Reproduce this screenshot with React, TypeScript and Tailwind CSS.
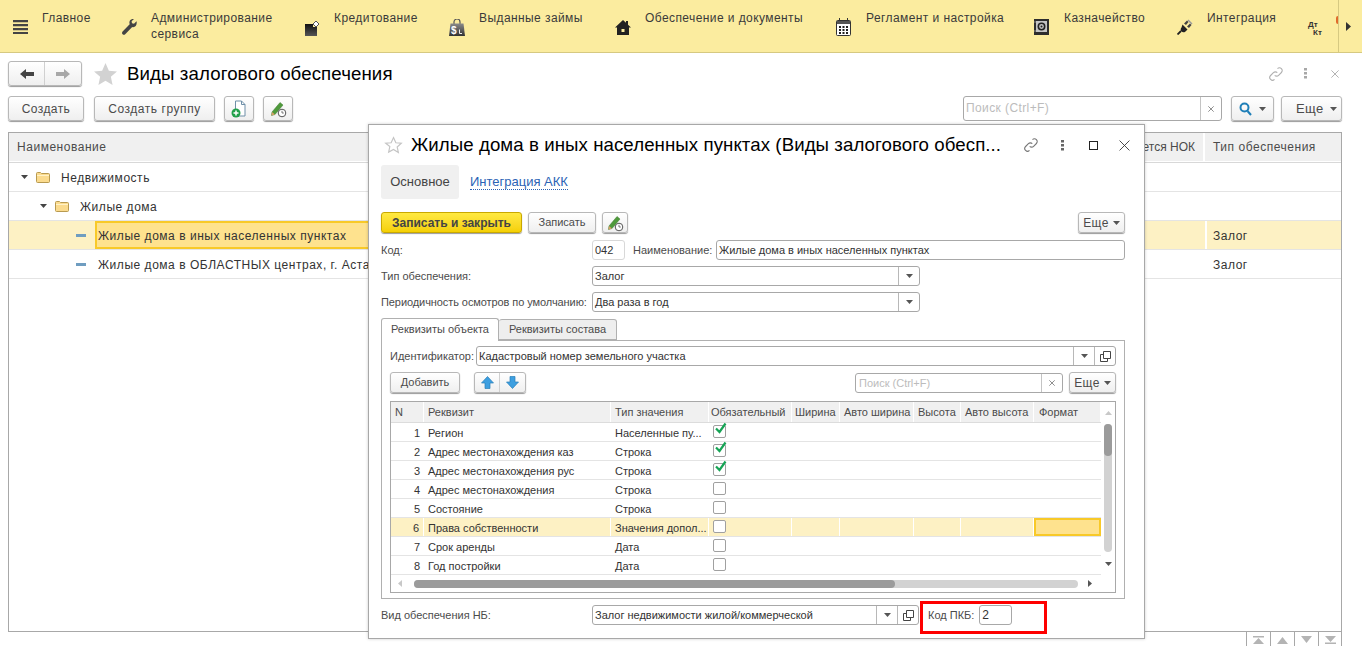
import type { ReactNode } from "react";

const BTN =
  "flex items-center justify-center rounded-[3px] border border-[#b8b8b8] bg-gradient-to-b from-white to-[#efefef] shadow-[0_1px_1px_#9a9a9a] text-[#4b4b4b]";

function Caret({ className = "fill-[#555]" }: { className?: string }) {
  return (
    <svg width="7" height="4" viewBox="0 0 7 4" className={className}>
      <path d="M0 0h7L3.500 4z" />
    </svg>
  );
}

function Burger() {
  return (
    <svg width="15" height="14" viewBox="0 0 15 14" className="fill-[#444]">
      <path d="M0 0h15v2.200H0zM0 4h15v2.200H0zM0 8h15v2.200H0zM0 12h15v2H0z" />
    </svg>
  );
}

function Wrench() {
  return (
    <svg width="15" height="16" viewBox="0 0 15 16" className="fill-[#444]">
      <path d="M14.500 2.200 12 4.800 10 4.300 9.600 2.300 12 0C9.800-.5 7.600 1 7.400 3.200c-.1.700.1 1.400.3 2L.6 12.500c-.8.900-.7 2 0 2.700s1.800.8 2.600 0l7-7.200c2.800.9 5.300-1.800 4.300-6z" />
    </svg>
  );
}

function Credit() {
  return (
    <svg width="15" height="15" viewBox="0 0 15 15" className="mt-[2px]">
      <defs>
        <linearGradient id="credit" x1="0" y1="0" x2="0" y2="1">
          <stop offset="0" stopColor="#111" />
          <stop offset="1" stopColor="#555" />
        </linearGradient>
      </defs>
      <path d="M0 3h8v3h4v9H0z" fill="url(#credit)" />
      <path d="M11 0l3 3-3 3-3-3z" fill="#fff" stroke="#555" strokeWidth="1" />
    </svg>
  );
}

function Bag() {
  return (
    <svg width="16" height="17" viewBox="0 0 16 17">
      <defs>
        <linearGradient id="bag" x1="0" y1="0" x2="0" y2="1">
          <stop offset="0" stopColor="#8a8a8a" />
          <stop offset="1" stopColor="#333" />
        </linearGradient>
      </defs>
      <path d="M5 5V3a3 3 0 0 1 6 0v2" fill="none" stroke="#555" strokeWidth="1.200" />
      <path d="M1.500 4.500h13L16 17H0z" fill="url(#bag)" />
      <text x="2" y="15" fontSize="10" fontWeight="700" fill="#fff" fontFamily="Liberation Sans">
        $
      </text>
      <path d="M10.500 10.500v4h2.500" fill="none" stroke="#eee" />
    </svg>
  );
}

function Home() {
  return (
    <svg width="16" height="15" viewBox="0 0 16 15" className="fill-[#222]">
      <path d="M8 0l3 2.800V1h2v3.700l3 2.800h-2V15H2V7.500H0z" />
      <path d="M6.500 9h3v3h-3z" fill="#fbec9f" />
    </svg>
  );
}

function Calendar() {
  return (
    <svg width="15" height="18" viewBox="0 0 15 18">
      <rect x="0.500" y="2.500" width="14" height="15" rx="1" fill="#fff" stroke="#333" />
      <rect x="1" y="3" width="13" height="3" fill="#555" />
      <path d="M3.500 0v3M11.500 0v3" stroke="#333" />
      <path d="M3 8h2v2H3zM6.500 8h2v2h-2zM10 8h2v2h-2zM3 11h2v2H3zM6.500 11h2v2h-2zM10 11h2v2h-2zM3 14h2v2H3zM6.500 14h2v2h-2zM10 14h2v2h-2z" fill="#222" />
    </svg>
  );
}

function Safe() {
  return (
    <svg width="15" height="16" viewBox="0 0 15 16">
      <rect x="0" y="0" width="15" height="16" fill="#2d2d2d" />
      <rect x="2" y="2" width="11" height="11" fill="#c4c4c4" />
      <circle cx="7.500" cy="7.500" r="3.200" fill="none" stroke="#222" strokeWidth="1.600" />
      <circle cx="7.500" cy="7.500" r="1" fill="#222" />
      <path d="M0 3h2M0 12h2" stroke="#888" />
    </svg>
  );
}

function Plug() {
  return (
    <svg width="16" height="16" viewBox="0 0 16 16">
      <path d="M5.500 5.500l5 5-2 2c-1.500 1.200-3 1-4 0s-1.200-2.500 0-4z" fill="#222" />
      <path d="M4 12 .5 15.500" stroke="#222" strokeWidth="1.800" />
      <path d="M7 4.500 10 1.500l1.500 1.500L9 6zM10 7.500l3-3 1.500 1.500-2.500 3z" fill="#444" />
      <path d="M11 1l4 4" stroke="#999" strokeWidth="1.500" />
    </svg>
  );
}

function NoteClock() {
  return (
    <svg width="18" height="18" viewBox="0 0 18 18">
      <path d="M3 12 11 2.500l3 2.500-8 9.500-3.500 1z" fill="#4f9a3c" stroke="#3c7a2d" strokeWidth="0.500" />
      <path d="M2.500 15.500 3 12l3 2.500z" fill="#d9a066" />
      <circle cx="13" cy="13" r="3.800" fill="#fff" stroke="#555" />
      <path d="M13 10.800V13h1.800" fill="none" stroke="#555" strokeWidth="0.800" />
    </svg>
  );
}

function DocPlus() {
  return (
    <svg width="16" height="18" viewBox="0 0 16 18">
      <path d="M4.500 1h6l3.500 3.500V16H4.500z" fill="#fff" stroke="#6f8fa8" />
      <path d="M10.500 1v3.500H14" fill="none" stroke="#6f8fa8" />
      <circle cx="5" cy="13" r="4.500" fill="#21a04a" />
      <path d="M5 10.500v5M2.500 13h5" stroke="#fff" strokeWidth="1.500" />
    </svg>
  );
}

function LinkIcon({ className }: { className: string }) {
  return (
    <svg width="16" height="16" viewBox="0 0 16 16" fill="none" strokeWidth="1.100" className={className}>
      <path d="M9.500 2.600a2.700 2.700 0 0 1 3.900 3.900L10.600 9.300a2.700 2.700 0 0 1-3.900 0" />
      <path d="M6.500 13.400a2.700 2.700 0 0 1-3.900-3.900L5.400 6.700a2.700 2.700 0 0 1 3.900 0" />
    </svg>
  );
}

function Dots({ className }: { className: string }) {
  return (
    <svg width="3" height="11" viewBox="0 0 3 11" className={className}>
      <path d="M0 0h3v2.500H0zM0 4h3v2.500H0zM0 8h3v2.500H0z" />
    </svg>
  );
}

function Cross({ size, className }: { size: number; className: string }) {
  return (
    <svg width={size} height={size} viewBox="0 0 10 10" fill="none" strokeWidth={size > 9 ? 0.8 : 1.1} className={className}>
      <path d="M0.500 0.500l9 9M9.500 0.500l-9 9" />
    </svg>
  );
}

function OpenIcon() {
  return (
    <svg width="11" height="11" viewBox="0 0 11 11" fill="none" stroke="#444">
      <path d="M3.500.5h7v7h-7z" />
      <path d="M3.500 3.500H.5v7h7V7.500" />
    </svg>
  );
}

function Arrow({ left }: { left?: boolean }) {
  return (
    <svg width="14" height="10" viewBox="0 0 14 10" className={left ? "fill-[#444]" : "fill-[#a8a8a8] rotate-180"}>
      <path d="M0 5 6 0v3h8v4H6v3z" />
    </svg>
  );
}

function BlueArrow({ down }: { down?: boolean }) {
  return (
    <svg width="13" height="13" viewBox="0 0 13 13" className={down ? "rotate-180" : ""}>
      <path d="M6.500.5 12.500 7H9v5.500H4V7H.5z" fill="#3d9fe0" stroke="#2a7fb8" strokeWidth="0.700" />
    </svg>
  );
}

const MENU: { label: ReactNode; icon: ReactNode; width: string; iconWidth: string }[] = [
  { label: "Главное", icon: <Burger />, width: "w-[109px]", iconWidth: "w-[29px]" },
  {
    label: (
      <>
        Администрирование
        <br />
        сервиса
      </>
    ),
    icon: <Wrench />,
    width: "w-[183px]",
    iconWidth: "w-[29px]",
  },
  { label: "Кредитование", icon: <Credit />, width: "w-[144px]", iconWidth: "w-[29px]" },
  { label: "Выданные займы", icon: <Bag />, width: "w-[166px]", iconWidth: "w-[30px]" },
  { label: "Обеспечение и документы", icon: <Home />, width: "w-[221px]", iconWidth: "w-[30px]" },
  { label: "Регламент и настройка", icon: <Calendar />, width: "w-[198px]", iconWidth: "w-[30px]" },
  { label: "Казначейство", icon: <Safe />, width: "w-[143px]", iconWidth: "w-[30px]" },
  { label: "Интеграция", icon: <Plug />, width: "w-[130px]", iconWidth: "w-[30px]" },
];

function TopBar() {
  return (
    <div className="flex h-[53px] border-b border-[#d6c981] bg-[#fbec9f] pl-[13px] text-[12px] leading-4 tracking-[0.42px] text-[#3a3a3a]">
      {MENU.map((item, i) => (
        <div key={i} className={`flex shrink-0 ${item.width}`}>
          <div className={`flex h-[52px] shrink-0 items-center pt-[2px] ${item.iconWidth}`}>{item.icon}</div>
          <div className="whitespace-nowrap pt-[10px]">{item.label}</div>
        </div>
      ))}
      <div className="relative w-[31px] shrink-0 pl-[1px] pt-[21px] text-[8px] font-bold leading-[8px] tracking-normal text-[#333]">
        Дт
        <div className="pl-[5px]">Кт</div>
        <div className="absolute right-0 top-[16px] h-[8px] w-[2px] rounded-l-[2px] bg-[#e06a2a]" />
      </div>
      <div className="flex w-[24px] items-center border-l border-[#d6c981] pl-[7px]">
        <svg width="5" height="9" viewBox="0 0 5 9" className="fill-[#333]">
          <path d="M0 0l5 4.500L0 9z" />
        </svg>
      </div>
    </div>
  );
}

function Header() {
  return (
    <>
      <div className="ml-2 mr-5 mt-2 flex h-[25px] items-center">
        <div className={`${BTN} h-[25px] w-[74px]`}>
          <div className="flex h-full w-[37px] items-center justify-center border-r border-[#d0d0d0]">
            <Arrow left />
          </div>
          <div className="flex h-full w-[37px] items-center justify-center">
            <Arrow />
          </div>
        </div>
        <svg width="23" height="22" viewBox="0 0 24 23" className="ml-[12px] fill-[#d2d2d2]">
          <path d="M12 0l3.500 8 8.500.8-6.400 5.700L19.400 23 12 18.500 4.600 23l1.800-8.500L0 8.800 8.500 8z" />
        </svg>
        <div className="ml-[10px] text-[18.67px] leading-6 tracking-[0.1px] text-black">Виды залогового обеспечения</div>
        <div className="ml-auto mr-[3px] flex items-center">
          <LinkIcon className="stroke-[#b0b0b0]" />
          <Dots className="ml-[20px] fill-[#a8a8a8]" />
          <Cross size={8} className="ml-[24px] stroke-[#a8a8a8]" />
        </div>
      </div>
      <div className="ml-2 mr-5 mt-[10px] flex h-[25px] items-center text-[12px] tracking-[0.4px]">
        <div className={`${BTN} h-[25px] w-[76px]`}>Создать</div>
        <div className={`${BTN} ml-[10px] h-[25px] w-[121px] tracking-[0.55px]`}>Создать группу</div>
        <div className={`${BTN} ml-[9px] h-[25px] w-[30px]`}>
          <DocPlus />
        </div>
        <div className={`${BTN} ml-[9px] h-[25px] w-[30px]`}>
          <NoteClock />
        </div>
        <div className="ml-auto flex h-[25px] w-[259px] rounded-[3px] border border-[#a8a8a8] bg-white">
          <div className="flex-1 pl-[2px] text-[12px] leading-[23px] text-[#bcbcbc]">Поиск (Ctrl+F)</div>
          <div className="flex w-[21px] items-center justify-center border-l border-[#c4c4c4]">
            <Cross size={6} className="stroke-[#555]" />
          </div>
        </div>
        <div className={`${BTN} ml-[9px] h-[25px] w-[43px] gap-[7px]`}>
          <svg width="13" height="14" viewBox="0 0 13 14" fill="none" stroke="#1f7fb8" strokeWidth="2">
            <circle cx="5.500" cy="5.500" r="4" />
            <path d="M8.500 9l3.500 4" />
          </svg>
          <Caret />
        </div>
        <div className={`${BTN} ml-[7px] h-[25px] w-[61px] justify-start gap-[6px] pl-[14px] text-[13px]`}>
          Еще
          <Caret />
        </div>
      </div>
    </>
  );
}

function ListTable() {
  const rows = [
    { text: "Недвижимость", indent: "pl-[12px]", folder: true },
    { text: "Жилые дома", indent: "pl-[31px]", folder: true },
    { text: "Жилые дома в иных населенных пунктах", indent: "pl-[67px]", type: "Залог", current: true },
    { text: "Жилые дома в ОБЛАСТНЫХ центрах, г. Астана и Алматы", indent: "pl-[67px]", type: "Залог" },
  ];
  return (
    <div className="ml-2 mr-5 mt-[11px] h-[500px] border border-[#a8a8a8] text-[12px] tracking-[0.53px] text-[#333]">
      <div className="flex h-[30px] border-b border-[#d8d8d8] pb-[1px] text-[#4b4b4b]">
        <div className="flex flex-1 items-center bg-[#f0f0f0] pl-2">Наименование</div>
        <div className="flex w-[137px] items-center justify-end border-r-2 border-white bg-[#f0f0f0] pr-2 tracking-normal">
          Учитывается НОК
        </div>
        <div className="flex w-[136px] items-center bg-[#f0f0f0] pl-2">Тип обеспечения</div>
      </div>
      {rows.map((row) => (
        <div key={row.text} className={`flex h-[29px] border-b border-[#e4e4e4] ${row.current ? "bg-[#fdf1c4]" : ""}`}>
          <div className={`flex w-[700px] shrink-0 items-center ${row.indent}`}>
            {row.folder ? (
              <>
                <Caret className="mr-[8px] fill-[#444]" />
                <svg width="14" height="12" viewBox="0 0 14 12" className="mr-[11px]">
                  <path d="M.5 2.500a1 1 0 0 1 1-1h3l1 1h7a1 1 0 0 1 1 1v7a1 1 0 0 1-1 1h-11a1 1 0 0 1-1-1z" fill="#fbdb8e" stroke="#b89a50" />
                  <path d="M1 4.500h12" stroke="#fff2c8" />
                </svg>
                <span className="pt-[2px]">{row.text}</span>
              </>
            ) : (
              <>
                <div className="mr-[9px] h-[3px] w-[10px] shrink-0 bg-[#6f9dc0]" />
                <div
                  className={`flex h-full flex-1 items-center whitespace-nowrap pl-[1px] pt-[1px] ${
                    row.current ? "border-2 border-[#f8c928] bg-[#fee28e]" : "ml-[2px]"
                  }`}
                >
                  {row.text}
                </div>
              </>
            )}
          </div>
          <div className="flex-1" />
          <div className={`flex w-[136px] items-center pl-2 pt-[1px] ${row.current ? "border-l-2 border-white pl-[6px]" : ""}`}>{row.type}</div>
        </div>
      ))}
    </div>
  );
}

function Pager() {
  return (
    <div className="mr-5 flex h-[14px] justify-end">
      {[0, 1, 2, 3].map((i) => (
        <div key={i} className="flex w-[24px] items-start justify-center border-l border-[#a8a8a8] pt-[4px] last:border-r">
          <svg width="11" height="8" viewBox="0 0 11 8" className={`fill-[#b4b4b4] ${i > 1 ? "rotate-180" : ""}`}>
            {i === 0 || i === 3 ? <path d="M0 0h11v1.500H0zM5.500 2 11 8H0z" /> : <path d="M5.500 1 11 8H0z" />}
          </svg>
        </div>
      ))}
    </div>
  );
}

function Field({ children, className = "" }: { children: ReactNode; className?: string }) {
  return (
    <div className={`flex h-[20px] items-center rounded-[3px] border border-[#a8a8a8] bg-white pl-[2px] text-[#333] ${className}`}>
      {children}
    </div>
  );
}

function Select({ value, className, open }: { value: string; className: string; open?: boolean }) {
  return (
    <div className={`flex h-[20px] rounded-[3px] border border-[#a8a8a8] bg-white text-[#333] ${className}`}>
      <div className="flex flex-1 items-center whitespace-nowrap pl-[2px]">{value}</div>
      <div className="flex w-[21px] items-center justify-center border-l border-[#b8b8b8]">
        <Caret />
      </div>
      {open && (
        <div className="flex w-[21px] items-center justify-center border-l border-[#b8b8b8]">
          <OpenIcon />
        </div>
      )}
    </div>
  );
}

const COLS = [
  { title: "N", width: "w-[33px]", pad: "pl-[4px]" },
  { title: "Реквизит", width: "w-[187px]", pad: "pl-[4px]" },
  { title: "Тип значения", width: "w-[98px]", pad: "pl-[4px]" },
  { title: "Обязательный", width: "w-[83px]", pad: "pl-[2px]" },
  { title: "Ширина", width: "w-[48px]", pad: "pl-[3px]" },
  { title: "Авто ширина", width: "w-[74px]", pad: "pl-[4px]" },
  { title: "Высота", width: "w-[47px]", pad: "pl-[4px]" },
  { title: "Авто высота", width: "w-[73px]", pad: "pl-[4px]" },
  { title: "Формат", width: "w-[67px]", pad: "pl-[5px]" },
];

const ATTRS = [
  { name: "Регион", type: "Населенные пу...", on: true },
  { name: "Адрес местонахождения каз", type: "Строка", on: true },
  { name: "Адрес местонахождения рус", type: "Строка", on: true },
  { name: "Адрес местонахождения", type: "Строка" },
  { name: "Состояние", type: "Строка" },
  { name: "Права собственности", type: "Значения допол...", current: true },
  { name: "Срок аренды", type: "Дата" },
  { name: "Год постройки", type: "Дата" },
];

function Check({ on }: { on?: boolean }) {
  return (
    <div className="relative -mt-[1px] h-[13px] w-[13px] rounded-[2px] border border-[#a0a0a0] bg-white">
      {on && (
        <svg width="13" height="12" viewBox="0 0 13 12" className="absolute left-0 top-[-4px]">
          <path d="M2 6.500 5.500 10 11.500 1.500" fill="none" stroke="#16a455" strokeWidth="2.200" />
        </svg>
      )}
    </div>
  );
}

function AttrTable() {
  return (
    <div className="mt-[8px] h-[192px] w-[726px] border border-[#a8a8a8] text-[11px]">
      <div className="flex h-[173px]">
        <div className="w-[710px] shrink-0">
          <div className="flex h-[21px] border-b border-[#dcdcdc] text-[#4b4b4b]">
            {COLS.map((col) => (
              <div key={col.title} className={`flex shrink-0 items-center whitespace-nowrap border-r border-white bg-[#f0f0f0] ${col.pad} ${col.width}`}>
                {col.title}
              </div>
            ))}
          </div>
          {ATTRS.map((row, r) => (
            <div key={row.name} className="flex h-[19px] border-b border-[#e4e4e4] text-[#333]">
              {COLS.map((col, c) => (
                <div
                  key={col.title}
                  className={`flex shrink-0 items-center whitespace-nowrap ${col.width} ${
                    row.current
                      ? c === 8
                        ? "border-2 border-[#f8c928] bg-[#fee28e]"
                        : "border-r border-white bg-[#fdf1c4]"
                      : ""
                  } ${c === 0 ? "justify-end pr-[4px]" : "pl-[4px]"} ${c < 3 ? "pt-[2px]" : ""}`}
                >
                  {c === 0 && r + 1}
                  {c === 1 && row.name}
                  {c === 2 && row.type}
                  {c === 3 && <Check on={row.on} />}
                </div>
              ))}
            </div>
          ))}
        </div>
        <div className="flex w-[14px] flex-col items-center pt-[9px]">
          <svg width="7" height="4" viewBox="0 0 7 4" className="fill-[#c8c8c8]">
            <path d="M3.500 0 7 4H0z" />
          </svg>
          <div className="mt-[9px] h-[128px] w-[8px] rounded-[4px] bg-[#d2d2d2]">
            <div className="h-[32px] w-[8px] rounded-[4px] bg-[#9b9b9b]" />
          </div>
          <Caret className="mt-[10px] fill-[#555]" />
        </div>
      </div>
      <div className="flex h-[17px] items-center pl-[7px]">
        <svg width="4" height="7" viewBox="0 0 4 7" className="fill-[#c8c8c8]">
          <path d="M0 3.500 4 0v7z" />
        </svg>
        <div className="ml-[12px] h-[8px] w-[664px] rounded-[4px] bg-[#d2d2d2]">
          <div className="h-[8px] w-[481px] rounded-[4px] bg-[#9b9b9b]" />
        </div>
        <svg width="4" height="7" viewBox="0 0 4 7" className="ml-[10px] fill-[#555]">
          <path d="M4 3.500 0 0v7z" />
        </svg>
      </div>
    </div>
  );
}

function Dialog() {
  return (
    <div className="absolute left-[368px] top-[124px] h-[515px] w-[777px] border border-[#a8a8a8] bg-white pl-[12px] text-[11px] text-[#4b4b4b] shadow-[0_0_3px_rgba(0,0,0,0.2)]">
      <div className="flex h-[40px] items-center">
        <svg width="19" height="18" viewBox="0 0 24 23" fill="none" stroke="#c4c4c4" strokeWidth="1.500" className="ml-[3px]">
          <path d="M12 2l3 6.600 7 .7-5.300 4.700 1.500 7L12 17.200 5.800 20.500l1.500-7L2 9.300l7-.7z" />
        </svg>
        <div className="ml-[8px] w-[600px] whitespace-nowrap text-[18.67px] leading-6 tracking-[0.07px] text-black">
          Жилые дома в иных населенных пунктах (Виды залогового обесп...
        </div>
        <LinkIcon className="ml-[12px] stroke-[#777]" />
        <Dots className="ml-[22px] fill-[#666]" />
        <div className="ml-[25px] h-[9px] w-[9px] border border-[#222]" />
        <Cross size={11} className="ml-[21px] stroke-[#333]" />
      </div>
      <div className="flex h-[34px] items-center text-[13px]">
        <div className="flex h-[34px] w-[78px] items-center justify-center rounded-[3px] bg-[#f0f0f0] text-[#444]">Основное</div>
        <div className="ml-[11px] border-b border-dotted border-[#2b63b5] leading-[15px] text-[#2b63b5]">Интеграция АКК</div>
      </div>
      <div className="mt-[13px] flex h-[21px] w-[744px] items-center">
        <div className="flex h-[21px] w-[141px] items-center justify-center rounded-[3px] border border-[#c9a800] bg-gradient-to-b from-[#ffe93f] to-[#f5d000] text-[12px] font-bold text-[#444] shadow-[0_1px_1px_#9a9a9a]">
          Записать и закрыть
        </div>
        <div className={`${BTN} ml-[6px] h-[21px] w-[68px]`}>Записать</div>
        <div className={`${BTN} ml-[6px] h-[21px] w-[26px]`}>
          <NoteClock />
        </div>
        <div className={`${BTN} ml-auto h-[21px] w-[47px] gap-[4px] text-[12px] tracking-[0.4px]`}>
          Еще
          <Caret />
        </div>
      </div>
      <div className="mt-[7px] flex h-[20px] w-[744px] items-center">
        <div className="w-[211px]">Код:</div>
        <Field className="w-[33px] border-[#d8d8d8]">042</Field>
        <div className="ml-[8px] w-[83px]">Наименование:</div>
        <Field className="flex-1">Жилые дома в иных населенных пунктах</Field>
      </div>
      <div className="mt-[6px] flex h-[20px] items-center">
        <div className="w-[211px]">Тип обеспечения:</div>
        <Select value="Залог" className="w-[328px]" />
      </div>
      <div className="mt-[6px] flex h-[20px] items-center">
        <div className="w-[211px] tracking-[-0.08px]">Периодичность осмотров по умолчанию:</div>
        <Select value="Два раза в год" className="w-[328px]" />
      </div>
      <div className="mt-[6px] flex h-[22px] items-end">
        <div className="relative z-10 -mb-px flex h-[23px] w-[118px] items-center justify-center rounded-t-[3px] border border-b-0 border-[#b0b0b0] bg-white pb-[2px]">
          Реквизиты объекта
        </div>
        <div className="flex h-[21px] w-[118px] items-center justify-center rounded-t-[3px] border border-l-0 border-[#b0b0b0] bg-[#eeeeee] pb-[1px]">
          Реквизиты состава
        </div>
      </div>
      <div className="h-[259px] w-[744px] border border-[#b0b0b0] pl-[8px] pt-[5px]">
        <div className="flex h-[20px] w-[726px] items-center">
          <div className="w-[86px]">Идентификатор:</div>
          <Select value="Кадастровый номер земельного участка" className="flex-1" open />
        </div>
        <div className="mt-[6px] flex h-[21px] w-[726px] items-center">
          <div className={`${BTN} h-[21px] w-[70px] text-[11px]`}>Добавить</div>
          <div className={`${BTN} ml-[14px] h-[21px] w-[52px]`}>
            <div className="flex h-full w-[26px] items-center justify-center border-r border-[#d0d0d0]">
              <BlueArrow />
            </div>
            <div className="flex h-full w-[26px] items-center justify-center">
              <BlueArrow down />
            </div>
          </div>
          <div className="ml-auto flex h-[20px] w-[208px] rounded-[3px] border border-[#a8a8a8] bg-white">
            <div className="flex-1 pl-[3px] leading-[18px] text-[#bcbcbc]">Поиск (Ctrl+F)</div>
            <div className="flex w-[21px] items-center justify-center border-l border-[#c4c4c4]">
              <Cross size={6} className="stroke-[#555]" />
            </div>
          </div>
          <div className={`${BTN} ml-[6px] h-[21px] w-[47px] gap-[4px] text-[12px] tracking-[0.4px]`}>
            Еще
            <Caret />
          </div>
        </div>
        <AttrTable />
      </div>
      <div className="mt-[2px] flex w-[744px] items-start">
        <div className="w-[211px] pt-[6px]">Вид обеспечения НБ:</div>
        <Select value="Залог недвижимости жилой/коммерческой" className="mt-[4px] w-[327px]" open />
        <div className="ml-[1px] flex h-[33px] w-[127px] items-start border-[3px] border-[#fe0000] pl-[5px] pt-[1px]">
          <span className="mt-[2px]">Код ПКБ:</span>
          <Field className="ml-[5px] w-[33px] text-[12px]">2</Field>
        </div>
      </div>
    </div>
  );
}

export default function App() {
  return (
    <div className="relative h-[646px] w-[1362px] overflow-hidden bg-white font-['Liberation_Sans',Arial,sans-serif]">
      <TopBar />
      <Header />
      <ListTable />
      <Pager />
      <Dialog />
    </div>
  );
}
